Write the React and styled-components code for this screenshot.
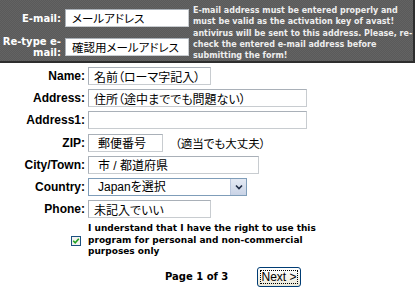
import React from 'react';
import styled, { createGlobalStyle } from 'styled-components';

const GlobalStyle = createGlobalStyle`
  body {
    margin: 0;
    background: #ffffff;
    font-family: "Liberation Sans", Arial, sans-serif;
  }
`;

const Page = styled.div`
  width: 417px;
  height: 289px;
  overflow: hidden;
`;

const Panel = styled.div`
  display: flex;
  width: 415px;
  height: 63px;
  box-sizing: border-box;
  background: repeating-conic-gradient(#5a5a5a 0 25%, #636363 0 50%) 0 0 / 2px 2px;
  border-right: 2px solid #2e2e2e;
  border-bottom: 2px solid #2e2e2e;
`;

const PanelFields = styled.div`
  display: grid;
  grid-template-columns: 61px 124px;
  grid-auto-rows: 18px;
  column-gap: 4px;
  row-gap: 11px;
  padding-top: 9px;
`;

const PanelLabel = styled.div`
  font-family: "DejaVu Sans", Verdana, sans-serif;
  font-weight: bold;
  font-size: 10px;
  line-height: 11px;
  color: #ffffff;
  text-align: right;
  align-self: center;
`;

const HelpText = styled.div`
  margin-left: 4px;
  padding-top: 5px;
  white-space: nowrap;
  font-family: "DejaVu Sans", Verdana, sans-serif;
  font-weight: bold;
  font-size: 8px;
  line-height: 11.25px;
  color: #eeeeee;
`;

const Input = styled.input`
  box-sizing: border-box;
  width: ${(p) => p.$w}px;
  height: 18px;
  margin: 0;
  padding: 0 0 0 ${(p) => p.$pad || 5}px;
  border: 1px solid #a9b0b8;
  border-right-color: #c8ccd0;
  border-bottom-color: #c8ccd0;
  background: #ffffff;
  font-family: "Liberation Sans", "Noto Sans CJK JP", sans-serif;
  font-feature-settings: "palt";
  font-size: ${(p) => p.$fs || 12}px;
  color: #000000;
  outline: none;
`;

const Form = styled.div`
  display: grid;
  grid-template-columns: 85px auto;
  grid-auto-rows: 18px;
  column-gap: 3px;
  row-gap: 4.2px;
  margin-top: 4px;
`;

const Label = styled.div`
  font-weight: bold;
  font-size: 12px;
  color: #000000;
  text-align: right;
  align-self: center;
`;

const Cell = styled.div`
  display: flex;
  align-items: center;
  gap: 12px;
`;

const Note = styled.span`
  font-family: "Noto Sans CJK JP", sans-serif;
  font-feature-settings: "palt";
  font-size: 11.5px;
  color: #000000;
`;

const Select = styled.div`
  box-sizing: border-box;
  display: flex;
  width: 159px;
  height: 18px;
  border: 1px solid #7f9db9;
  background: #ffffff;
`;

const SelectText = styled.div`
  flex: 1;
  padding-left: 9px;
  font-family: "Liberation Sans", "Noto Sans CJK JP", sans-serif;
  font-feature-settings: "palt";
  font-size: 12px;
  line-height: 16px;
  color: #000000;
`;

const SelectButton = styled.div`
  width: 15px;
  display: flex;
  align-items: center;
  justify-content: center;
  background: linear-gradient(#e4eaf4, #c9d3e6);
  border-left: 1px solid #b9c6dd;
`;

const AgreeRow = styled.div`
  display: grid;
  grid-template-columns: 85px 280px;
  column-gap: 3px;
  margin-top: 5px;
`;

const CheckBox = styled.div`
  justify-self: end;
  align-self: center;
  margin-right: 4px;
  margin-top: 1px;
  width: 10px;
  height: 10px;
  box-sizing: border-box;
  border: 1px solid #1c5180;
  background: #f4f4f0;
  display: flex;
  align-items: center;
  justify-content: center;
`;

const AgreeText = styled.div`
  white-space: nowrap;
  font-family: "DejaVu Sans", Verdana, sans-serif;
  font-weight: bold;
  font-size: 9px;
  line-height: 11.5px;
  color: #000000;
`;

const Pager = styled.div`
  display: flex;
  align-items: center;
  padding-left: 165px;
  margin-top: 9px;
`;

const PageText = styled.div`
  font-family: "DejaVu Sans", Verdana, sans-serif;
  font-weight: bold;
  font-size: 10px;
  color: #000000;
  width: 92px;
`;

const Button = styled.button`
  box-sizing: border-box;
  width: 44px;
  height: 20px;
  padding: 2px;
  border: 1px solid #003c74;
  border-radius: 3px;
  background: linear-gradient(#ffffff, #ece9d8);
  font-family: "Liberation Sans", Arial, sans-serif;
  font-size: 12px;
  color: #000000;
  cursor: pointer;
`;

const Focus = styled.span`
  display: block;
  height: 100%;
  box-sizing: border-box;
  border: 1px dotted #000000;
  line-height: 13px;
`;

const App = () => {
  return (
    <Page>
      <GlobalStyle />
      <Panel>
        <PanelFields>
          <PanelLabel>E-mail:</PanelLabel>
          <Input $w={124} $pad={6} $fs={11.5} defaultValue="メールアドレス" readOnly />
          <PanelLabel>
            Re-type e-
            <br />
            mail:
          </PanelLabel>
          <Input $w={124} $pad={6} $fs={11.5} defaultValue="確認用メールアドレス" readOnly />
        </PanelFields>
        <HelpText>
          E-mail address must be entered properly and
          <br />
          must be valid as the activation key of avast!
          <br />
          antivirus will be sent to this address. Please, re-
          <br />
          check the entered e-mail address before
          <br />
          submitting the form!
        </HelpText>
      </Panel>

      <Form>
        <Label>Name:</Label>
        <Input $w={123} defaultValue="名前（ローマ字記入）" readOnly />
        <Label>Address:</Label>
        <Input $w={219} defaultValue="住所（途中まででも問題ない）" readOnly />
        <Label>Address1:</Label>
        <Input $w={219} defaultValue="" readOnly />
        <Label>ZIP:</Label>
        <Cell>
          <Input $w={75} $pad={9} defaultValue="郵便番号" readOnly />
          <Note>（適当でも大丈夫）</Note>
        </Cell>
        <Label>City/Town:</Label>
        <Input $w={171} $pad={9} defaultValue="市 / 都道府県" readOnly />
        <Label>Country:</Label>
        <Select>
          <SelectText>Japanを選択</SelectText>
          <SelectButton>
            <svg width="8" height="6" viewBox="0 0 8 6">
              <path d="M1 1.5 L4 4.5 L7 1.5" fill="none" stroke="#1d2a44" strokeWidth="1.6" />
            </svg>
          </SelectButton>
        </Select>
        <Label>Phone:</Label>
        <Input $w={123} defaultValue="未記入でいい" readOnly />
      </Form>

      <AgreeRow>
        <CheckBox>
          <svg width="8" height="8" viewBox="0 0 8 8">
            <path d="M1.2 3.8 L3.2 5.8 L6.8 1.8" fill="none" stroke="#21a121" strokeWidth="1.6" />
          </svg>
        </CheckBox>
        <AgreeText>
          I understand that I have the right to use this
          <br />
          program for personal and non-commercial
          <br />
          purposes only
        </AgreeText>
      </AgreeRow>

      <Pager>
        <PageText>Page 1 of 3</PageText>
        <Button>
          <Focus>Next &gt;</Focus>
        </Button>
      </Pager>
    </Page>
  );
};

export default App;
